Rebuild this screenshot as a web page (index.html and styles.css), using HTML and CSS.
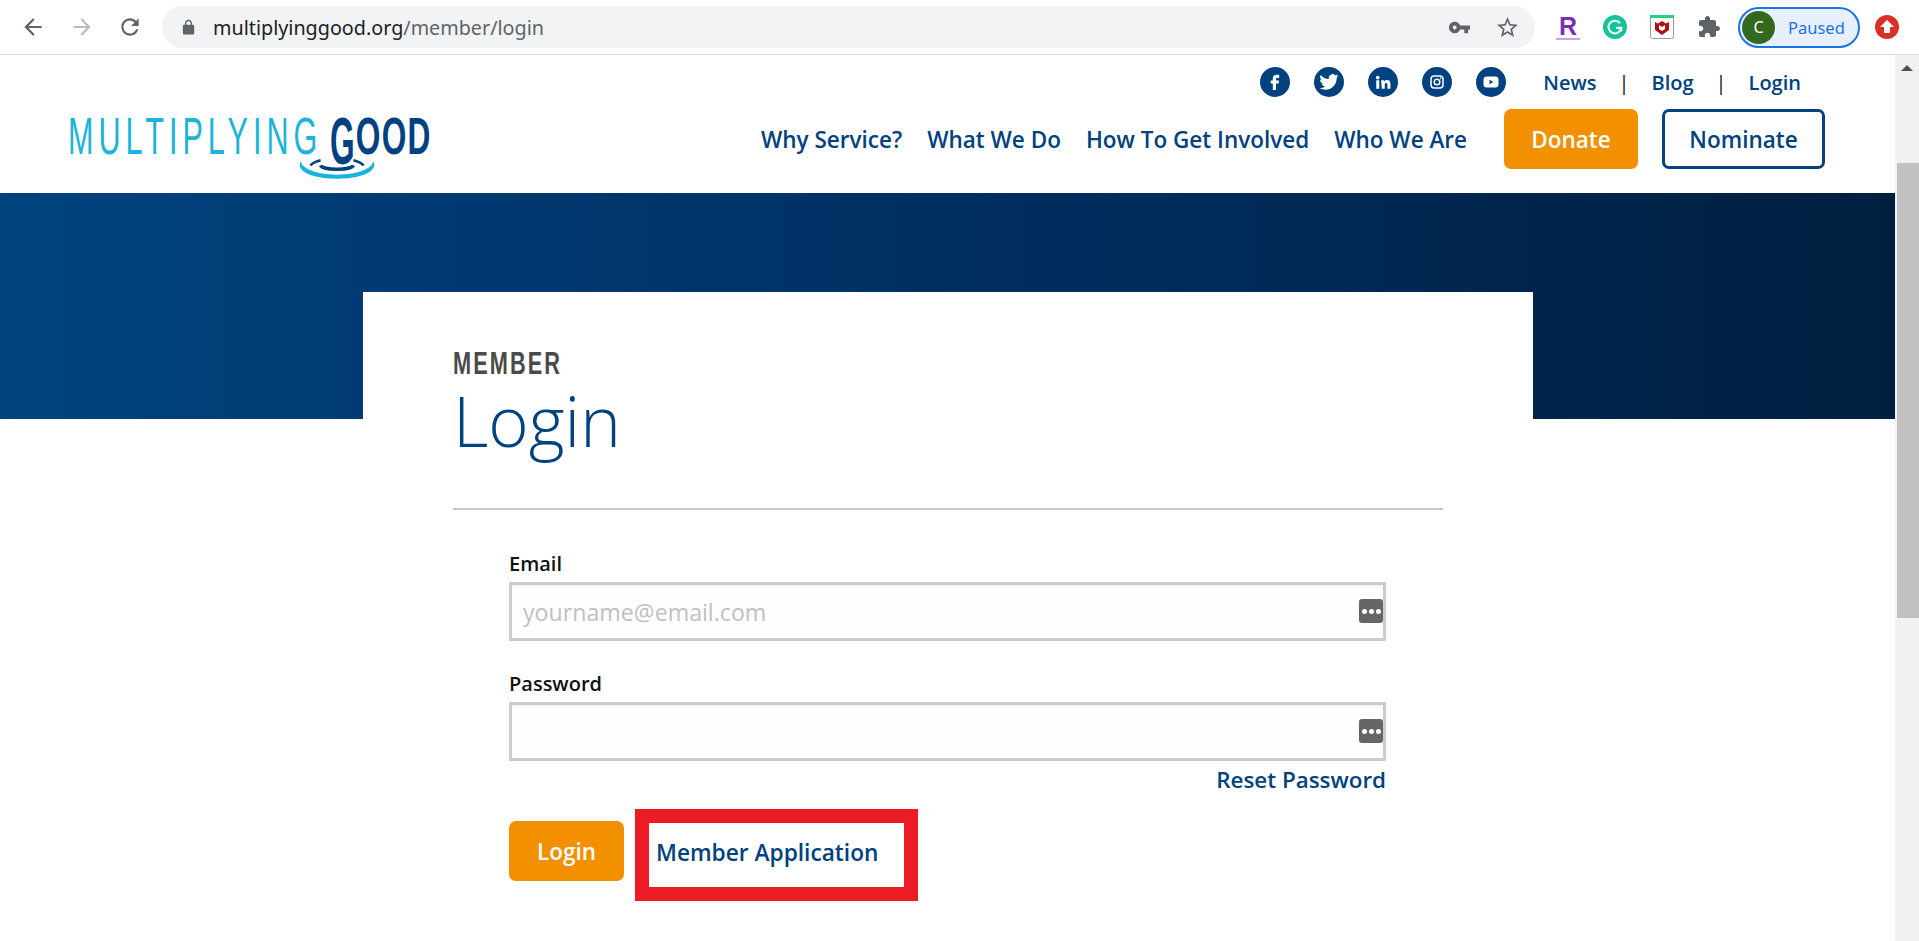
FILE: index.html
```html
<!DOCTYPE html>
<html lang="en">
<head>
    <meta charset="UTF-8">
    <meta name="viewport" content="width=device-width, initial-scale=1.0">
    <title>Member Login</title>
    <link rel="stylesheet" href="styles.css">
</head>
<body>
    <!-- Browser toolbar -->
    <div class="toolbar">
        <svg class="tool-icon back" viewBox="0 0 24 24"><path d="M20 11H7.83l5.59-5.59L12 4l-8 8 8 8 1.41-1.41L7.83 13H20v-2z"/></svg>
        <svg class="tool-icon forward" viewBox="0 0 24 24"><path d="M12 4l-1.41 1.41L16.17 11H4v2h12.17l-5.58 5.59L12 20l8-8z"/></svg>
        <svg class="tool-icon reload" viewBox="0 0 24 24"><path d="M17.65 6.35C16.2 4.9 14.21 4 12 4c-4.42 0-7.99 3.58-7.99 8s3.57 8 7.99 8c3.73 0 6.84-2.55 7.73-6h-2.08c-.82 2.33-3.04 4-5.65 4-3.31 0-6-2.69-6-6s2.69-6 6-6c1.66 0 3.14.69 4.22 1.78L13 11h7V4l-2.35 2.35z"/></svg>
        <div class="omnibox">
            <svg class="lock" viewBox="0 0 24 24"><path d="M18 8h-1V6c0-2.76-2.24-5-5-5S7 3.24 7 6v2H6c-1.1 0-2 .9-2 2v10c0 1.1.9 2 2 2h12c1.1 0 2-.9 2-2V10c0-1.1-.9-2-2-2zM9 6c0-1.66 1.34-3 3-3s3 1.34 3 3v2H9V6z"/></svg>
            <span class="url">multiplyinggood.org<span class="url-path">/member/login</span></span>
            <svg class="key" viewBox="0 0 24 24"><path d="M12.65 10C11.83 7.67 9.61 6 7 6c-3.31 0-6 2.69-6 6s2.69 6 6 6c2.61 0 4.83-1.67 5.65-4H17v4h4v-4h2v-4H12.65zM7 14c-1.1 0-2-.9-2-2s.9-2 2-2 2 .9 2 2-.9 2-2 2z"/></svg>
            <svg class="star" viewBox="0 0 24 24"><path d="M22 9.24l-7.19-.62L12 2 9.19 8.63 2 9.24l5.46 4.73L5.82 21 12 17.27 18.18 21l-1.63-7.03L22 9.24zM12 15.4l-3.76 2.27 1-4.28-3.32-2.88 4.38-.38L12 6.1l1.71 4.04 4.38.38-3.32 2.88 1 4.28L12 15.4z"/></svg>
        </div>
        <div class="extensions">
            <span class="ext-r">R</span>
            <svg class="ext" viewBox="0 0 24 24"><circle cx="12" cy="12" r="12" fill="#15c39a"/><path d="M17 8.2A6.4 6.4 0 1 0 18.2 13H13" fill="none" stroke="#fff" stroke-width="2"/><path d="M18.4 16.5v-4h-4" fill="none" stroke="#fff" stroke-width="1.6"/></svg>
            <svg class="ext" viewBox="0 0 24 24"><rect x="0.5" y="0.5" width="23" height="23" rx="2" fill="#fff" stroke="#9a9a9a"/><rect width="24" height="3" fill="#1fd47a"/><path d="M5 7l3 1.5L12 6l4 2.5L19 7v8l-7 5-7-5z" fill="#b01116"/><path d="M9 10v4l3 2 3-2v-4l-3 2z" fill="#fff"/></svg>
            <svg class="ext puzzle" viewBox="0 0 24 24"><path d="M20.5 11H19V7c0-1.1-.9-2-2-2h-4V3.5C13 2.12 11.88 1 10.5 1S8 2.12 8 3.5V5H4c-1.1 0-1.99.9-1.99 2v3.8H3.5c1.49 0 2.7 1.21 2.7 2.7s-1.21 2.7-2.7 2.7H2V20c0 1.1.9 2 2 2h3.8v-1.5c0-1.49 1.21-2.7 2.7-2.7 1.49 0 2.7 1.21 2.7 2.7V22H17c1.1 0 2-.9 2-2v-4h1.5c1.38 0 2.5-1.12 2.5-2.5S21.88 11 20.5 11z"/></svg>
        </div>
        <div class="profile">
            <span class="avatar">C</span>
            <span class="paused">Paused</span>
        </div>
        <svg class="update" viewBox="0 0 24 24"><circle cx="12" cy="12" r="12" fill="#d93025"/><path d="M12 5l7 7h-4v6H9v-6H5z" fill="#fff"/></svg>
    </div>

    <div class="viewport">
        <div class="page">
            <header class="site-header">
                <a class="logo" href="#">
                    <span class="logo-light">MULTIPLYING</span><span class="logo-bold"><span class="logo-g">G</span>OOD</span>
                    <svg class="ripple" viewBox="0 0 80 20">
                        <path d="M5 2C0 8 8 19 40 19S80 8 75 2C75 9 60 15 40 15S5 9 5 2z" fill="#1ab4dc"/>
                        <path d="M14 6c3-3 6-4 10-5M66 6c-3-3-6-4-10-5" fill="none" stroke="#00417f" stroke-width="2.4"/>
                        <path d="M24 6c2 5 30 5 32 0" fill="none" stroke="#00417f" stroke-width="3.4"/>
                    </svg>
                </a>
                <div class="header-right">
                    <div class="top-row">
                        <div class="social">
                            <a class="social-icon" href="#"><svg viewBox="0 0 24 24"><path d="M14.2 8h2V4.8h-2.6c-2.700 0-3.800 1.700-3.800 3.800V10.500H7.700v3h2.100V20h3.200v-6.500h2.600l.4-3h-3V8.900c0-.6.300-.9 1.200-.9z"/></svg></a>
                            <a class="social-icon" href="#"><svg viewBox="-3 -3 30 30"><path d="M23.950 4.570a10 10 0 0 1-2.820.770 4.960 4.960 0 0 0 2.160-2.720c-.950.550-2 .950-3.120 1.180a4.920 4.920 0 0 0-8.380 4.480C7.690 8.090 4.070 6.130 1.640 3.160a4.820 4.820 0 0 0-.670 2.480c0 1.700.870 3.200 2.180 4.080a4.900 4.900 0 0 1-2.230-.620v.060a4.920 4.920 0 0 0 3.950 4.830 5 5 0 0 1-2.210.080 4.940 4.940 0 0 0 4.600 3.420A9.870 9.870 0 0 1 0 19.540a14 14 0 0 0 7.560 2.210c9.050 0 14-7.500 14-13.980 0-.210 0-.420-.02-.63a9.940 9.940 0 0 0 2.410-2.570z"/></svg></a>
                            <a class="social-icon" href="#"><svg viewBox="-4 -4 32 32"><path d="M4.980 3.500a2.500 2.500 0 1 1 0 5 2.500 2.500 0 0 1 0-5zM3 9.750h4V21H3zM9.500 9.750h3.800v1.540h.050c.530-1 1.830-2.050 3.770-2.050 4.030 0 4.780 2.650 4.780 6.100V21h-4v-5c0-1.200-.020-2.740-1.670-2.740-1.670 0-1.930 1.300-1.930 2.650V21h-4z"/></svg></a>
                            <a class="social-icon" href="#"><svg viewBox="0 0 24 24"><rect x="6" y="6" width="12" height="12" rx="3.200" fill="none" stroke="#fff" stroke-width="1.500"/><circle cx="12" cy="12" r="2.800" fill="none" stroke="#fff" stroke-width="1.500"/><circle cx="15.600" cy="8.400" r=".8"/></svg></a>
                            <a class="social-icon" href="#"><svg viewBox="0 0 24 24"><rect x="4.500" y="6.500" width="15" height="11" rx="3"/><path d="M10.500 9.800v4.400l3.800-2.200z" fill="#00417f"/></svg></a>
                        </div>
                        <nav class="util-nav">
                            <a href="#">News</a><span class="sep">|</span><a href="#">Blog</a><span class="sep">|</span><a href="#">Login</a>
                        </nav>
                    </div>
                    <div class="main-row">
                        <nav class="main-nav">
                            <a href="#">Why Service?</a>
                            <a href="#">What We Do</a>
                            <a href="#">How To Get Involved</a>
                            <a href="#">Who We Are</a>
                        </nav>
                        <a class="btn btn-orange donate" href="#">Donate</a>
                        <a class="btn btn-outline" href="#">Nominate</a>
                    </div>
                </div>
            </header>

            <div class="hero-band"></div>

            <main class="card">
                <div class="card-head">
                    <div class="eyebrow">MEMBER</div>
                    <h1>Login</h1>
                </div>
                <form class="login-form">
                    <label for="email">Email</label>
                    <div class="field">
                        <input type="text" id="email" placeholder="yourname@email.com">
                        <span class="pass-icon"><i></i><i></i><i></i></span>
                    </div>
                    <label for="password">Password</label>
                    <div class="field">
                        <input type="password" id="password">
                        <span class="pass-icon"><i></i><i></i><i></i></span>
                    </div>
                    <div class="reset-row"><a href="#">Reset Password</a></div>
                    <div class="actions">
                        <button type="button" class="btn btn-orange login-btn">Login</button>
                        <a class="apply-link" href="#">Member Application</a>
                    </div>
                </form>
            </main>
        </div>

        <div class="scrollbar">
            <div class="scroll-up"></div>
            <div class="scroll-thumb"></div>
        </div>
    </div>
</body>
</html>
```

FILE: styles.css
```css
html, body {
    height: 100%;
    margin: 0;
    overflow: hidden;
}

body {
    font-family: "Open Sans", "Noto Sans", Arial, sans-serif;
    background: #fff;
    color: #00417f;
}

a {
    color: #00417f;
    text-decoration: none;
}

/* Browser toolbar */
.toolbar {
    height: 54px;
    border-bottom: 1px solid #dcdcdc;
    display: flex;
    align-items: center;
    background: #fff;
    box-sizing: content-box;
    font-family: "Noto Sans", Arial, sans-serif;
}

.tool-icon {
    width: 26px;
    height: 26px;
    fill: #5f6368;
}

.back { margin-left: 20px; }
.forward { margin-left: 23px; fill: #bdbdbd; }
.reload { margin-left: 22px; }

.omnibox {
    margin-left: 19px;
    width: 1373px;
    height: 42px;
    border-radius: 21px;
    background: #f1f3f4;
    display: flex;
    align-items: center;
}

.lock {
    width: 17px;
    height: 17px;
    fill: #5f6368;
    margin-left: 18px;
}

.url {
    margin-left: 16px;
    font-size: 19.75px;
    color: #202124;
    flex: 1;
}

.url-path { color: #5f6368; }

.key {
    width: 23px;
    height: 23px;
    fill: #5f6368;
    margin-right: 24px;
}

.star {
    width: 25px;
    height: 25px;
    fill: #5f6368;
    margin-right: 15px;
}

.extensions {
    display: flex;
    align-items: center;
    margin-left: 21px;
    gap: 23px;
}

.ext-r {
    width: 24px;
    text-align: center;
    font: bold 25px "Liberation Sans", sans-serif;
    color: #7a2fb5;
    border-bottom: 2px solid #c9a5e8;
    line-height: 24px;
}

.ext {
    width: 24px;
    height: 24px;
}

.puzzle { fill: #5f6368; }

.profile {
    margin-left: 17px;
    width: 122px;
    height: 41px;
    box-sizing: border-box;
    border: 2px solid #1a73e8;
    border-radius: 21px;
    background: #e8f0fe;
    display: flex;
    align-items: center;
    padding-left: 2px;
}

.avatar {
    width: 33px;
    height: 33px;
    border-radius: 50%;
    background: #33691e;
    color: #fff;
    font-size: 16px;
    display: flex;
    align-items: center;
    justify-content: center;
}

.paused {
    margin-left: 13px;
    font-size: 16.5px;
    color: #1a73e8;
}

.update {
    width: 24px;
    height: 24px;
    margin-left: 15px;
}

/* Page and scrollbar */
.viewport {
    display: flex;
    height: 886px;
}

.page {
    flex: 1;
    min-width: 0;
    overflow: hidden;
}

.scrollbar {
    width: 24px;
    background: #f1f1f1;
    padding-top: 10px;
    box-sizing: border-box;
}

.scroll-up {
    width: 0;
    height: 0;
    margin: 0 auto;
    border: 6px solid transparent;
    border-top: 0;
    border-bottom: 6px solid #505050;
}

.scroll-thumb {
    margin: 92px 0 0 2px;
    height: 455px;
    background: #c1c1c1;
}

/* Site header */
.site-header {
    height: 138px;
    display: flex;
    justify-content: space-between;
    padding: 0 70px 0 68px;
}

.logo {
    position: relative;
    display: flex;
    margin-top: 55px;
    height: 54px;
    width: 360px;
    font-family: "Liberation Sans", sans-serif;
    font-size: 51px;
    line-height: 54px;
    white-space: nowrap;
}

/* no condensed face installed, so the wordmark is squeezed */
.logo-light {
    display: block;
    width: 250px;
    flex: none;
    color: #1ab4dc;
    letter-spacing: 8.3px;
    transform: scaleX(.6);
    transform-origin: left;
}

.logo-bold {
    display: block;
    width: 100px;
    flex: none;
    margin-left: 12px;
    color: #00417f;
    font-weight: bold;
    letter-spacing: 2px;
    transform: scaleX(.62);
    transform-origin: left;
}

.logo-g {
    display: inline-block;
    transform: scaleY(1.3);
    transform-origin: 50% 20%;
}

.ripple {
    position: absolute;
    left: 228px;
    top: 49px;
    width: 82px;
    height: 21px;
}

.header-right {
    display: flex;
    flex-direction: column;
    align-items: flex-end;
}

.top-row {
    display: flex;
    align-items: center;
    height: 54px;
    padding-right: 24px;
}

.social {
    display: flex;
    gap: 24px;
}

.social-icon {
    width: 30px;
    height: 30px;
    border-radius: 50%;
    background: #00417f;
    display: flex;
    align-items: center;
    justify-content: center;
}

.social-icon svg {
    width: 24px;
    height: 24px;
    fill: #fff;
}

.util-nav {
    margin-left: 37px;
    display: flex;
    align-items: center;
    font-size: 20px;
    font-weight: 600;
}

.sep {
    color: #111;
    margin: 0 22px;
    font-weight: 400;
}

.main-row {
    display: flex;
    align-items: center;
}

.main-nav {
    display: flex;
    gap: 25px;
    font-size: 22.5px;
    font-weight: 600;
}

.btn {
    height: 60px;
    box-sizing: border-box;
    border-radius: 7px;
    display: flex;
    align-items: center;
    justify-content: center;
    font-family: inherit;
    font-size: 22.5px;
    font-weight: 600;
}

.btn-orange {
    background: #f39000;
    color: #fff;
    border: none;
}

.donate {
    width: 134px;
    margin-left: 37px;
}

.btn-outline {
    width: 163px;
    margin-left: 24px;
    border: 3px solid #00417f;
}

/* Blue band behind the card */
.hero-band {
    height: 226px;
    background: linear-gradient(to right, #00437f, #002f62 50%, #001f3f);
}

.card {
    width: 990px;
    margin: -127px 0 0 363px;
    padding: 0 90px;
    background: #fff;
}

.card-head {
    width: 990px;
    height: 218px;
    box-sizing: border-box;
    padding-top: 54px;
    border-bottom: 2px solid #c8c8c8;
}

.eyebrow {
    font-family: "Liberation Sans", sans-serif;
    font-weight: bold;
    font-size: 32px;
    line-height: 34px;
    letter-spacing: 3px;
    color: #4a4a4a;
    transform: scaleX(.68);
    transform-origin: left;
}

h1 {
    margin: 0;
    font-size: 70px;
    line-height: 80px;
    font-weight: 300;
    color: #00417f;
    transform: scaleX(.985);
    transform-origin: left;
}

.login-form {
    width: 877px;
    margin-left: 56px;
    padding-top: 41px;
}

label {
    display: block;
    font-size: 20px;
    font-weight: 600;
    color: #111;
    line-height: 26px;
    margin-bottom: 5px;
}

.field {
    position: relative;
    height: 59px;
    margin-bottom: 30px;
}

.field input {
    width: 100%;
    height: 100%;
    box-sizing: border-box;
    border: 3px solid #ccc;
    background: #fefefe;
    box-shadow: inset 0 2px 2px #f4f4f4;
    padding: 0 11px;
    font-family: inherit;
    font-size: 23.2px;
    outline: none;
}

.field input::placeholder {
    color: #c0c0c0;
}

.pass-icon {
    position: absolute;
    right: 3px;
    top: 17px;
    width: 24px;
    height: 24px;
    border-radius: 3px;
    background: #666;
    display: flex;
    align-items: center;
    justify-content: center;
    gap: 2px;
}

.pass-icon i {
    width: 5px;
    height: 5px;
    border-radius: 50%;
    background: #fff;
}

.reset-row {
    margin-top: -27px;
    text-align: right;
    font-size: 22.4px;
    font-weight: 600;
    line-height: 32px;
}

.actions {
    display: flex;
    align-items: flex-start;
    margin-top: 13px;
}

.login-btn {
    width: 115px;
    margin-top: 12px;
}

.apply-link {
    margin-left: 11px;
    width: 283px;
    height: 92px;
    box-sizing: border-box;
    border: 14px solid #ed1c24;
    padding: 0 0 6px 7px;
    display: flex;
    align-items: center;
    font-size: 22.7px;
    font-weight: 600;
}
```
